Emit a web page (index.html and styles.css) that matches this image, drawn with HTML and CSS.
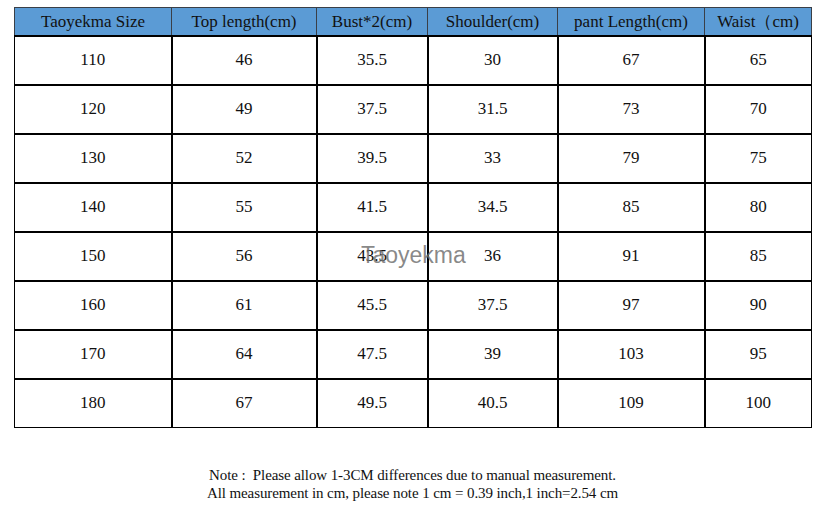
FILE: index.html
```html
<!DOCTYPE html>
<html>
<head>
<meta charset="utf-8">
<link rel="stylesheet" href="styles.css">
</head>
<body>
<div class="page">
  <div class="chart">
    <table class="size-table">
      <colgroup>
        <col class="c1"><col class="c2"><col class="c3"><col class="c4"><col class="c5"><col class="c6">
      </colgroup>
      <thead>
        <tr>
          <th>Taoyekma Size</th><th>Top length(cm)</th><th>Bust*2(cm)</th><th>Shoulder(cm)</th><th>pant Length(cm)</th><th>Waist（cm)</th>
        </tr>
      </thead>
      <tbody>
        <tr><td>110</td><td>46</td><td>35.5</td><td>30</td><td>67</td><td>65</td></tr>
        <tr><td>120</td><td>49</td><td>37.5</td><td>31.5</td><td>73</td><td>70</td></tr>
        <tr><td>130</td><td>52</td><td>39.5</td><td>33</td><td>79</td><td>75</td></tr>
        <tr><td>140</td><td>55</td><td>41.5</td><td>34.5</td><td>85</td><td>80</td></tr>
        <tr><td>150</td><td>56</td><td>43.5</td><td>36</td><td>91</td><td>85</td></tr>
        <tr><td>160</td><td>61</td><td>45.5</td><td>37.5</td><td>97</td><td>90</td></tr>
        <tr><td>170</td><td>64</td><td>47.5</td><td>39</td><td>103</td><td>95</td></tr>
        <tr><td>180</td><td>67</td><td>49.5</td><td>40.5</td><td>109</td><td>100</td></tr>
      </tbody>
    </table>
    <div class="watermark">Taoyekma</div>
  </div>
  <div class="note">
    <p>Note :&nbsp; Please allow 1-3CM differences due to manual measurement.</p>
    <p>All measurement in cm, please note 1 cm = 0.39 inch,1 inch=2.54 cm</p>
  </div>
</div>
</body>
</html>
```
FILE: styles.css
```css
html, body {
  margin: 0;
  padding: 0;
  background: #ffffff;
}
.page {
  width: 830px;
  height: 520px;
  padding: 7px 0 0 14px;
  box-sizing: border-box;
  font-family: "Liberation Serif", "Times New Roman", serif;
  color: #111;
}
.chart {
  position: relative;
  width: 797px;
}
.size-table {
  border-collapse: collapse;
  table-layout: fixed;
  width: 797px;
}
.c1 { width: 157px; }
.c2 { width: 145px; }
.c3 { width: 111px; }
.c4 { width: 130px; }
.c5 { width: 147px; }
.c6 { width: 107px; }

.size-table th {
  background: #5b9bd5;
  font-weight: normal;
  font-size: 17px;
  height: 27px;
  padding: 0;
  border: 1px solid #3a3f47;
  text-align: center;
  color: #111;
}
.size-table td {
  font-size: 17px;
  height: 46px;
  padding: 0 0 1px 0;
  border: 2px solid #000;
  text-align: center;
}
.size-table tbody tr td:first-child { border-left: 1px solid #000; }
.size-table tbody tr td:last-child { border-right: 1px solid #000; }
.size-table tbody tr:last-child td { border-bottom: 1px solid #000; }

.watermark {
  position: absolute;
  left: 347px;
  top: 235px;
  font-family: "Liberation Sans", Arial, sans-serif;
  font-size: 23px;
  font-weight: 500;
  color: rgba(110, 110, 110, 0.82);
  pointer-events: none;
}
.note {
  margin-top: 38px;
  width: 797px;
  text-align: center;
  font-size: 15px;
  line-height: 18px;
  letter-spacing: -0.1px;
}
.note p {
  margin: 0;
}
```
